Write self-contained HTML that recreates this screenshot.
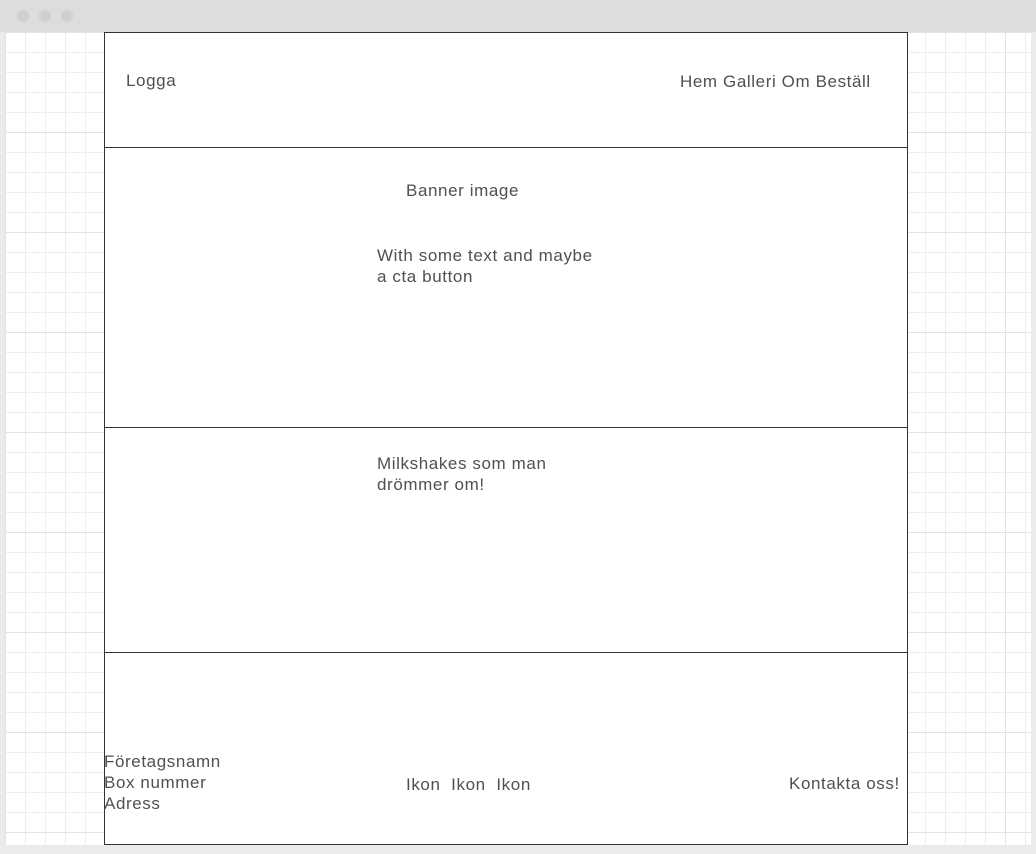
<!DOCTYPE html><html><head><style>
body{margin:0;width:1036px;height:854px;background:#ebebeb;position:relative;overflow:hidden;font-family:"Liberation Sans",sans-serif;color:#505050;font-size:17px}
.top{position:absolute;left:0;top:0;width:1036px;height:32px;background:#dddddd}
.dot{position:absolute;top:10px;width:12px;height:12px;border-radius:50%;background:#cfcfcf}
.grid{position:absolute;left:5px;top:32px;width:1026px;height:813px;background-color:#fff;
background-image:linear-gradient(#e2e2e2 1px,transparent 1px),linear-gradient(90deg,#e2e2e2 1px,transparent 1px),linear-gradient(#eeeeee 1px,transparent 1px),linear-gradient(90deg,#eeeeee 1px,transparent 1px);
background-size:100px 100px,100px 100px,20px 20px,20px 20px;background-position:0 0,0 0,0 0,0 0}
.box{position:absolute;left:104px;width:802px;border:1px solid #333;background:#fff}
.t{position:absolute;line-height:21px;white-space:nowrap;letter-spacing:0.6px}
</style></head><body>
<div class="top"><div class="dot" style="left:17px"></div><div class="dot" style="left:39px"></div><div class="dot" style="left:61px"></div></div>
<div class="grid"></div>
<div class="box" style="top:32px;height:114px"></div>
<div class="box" style="top:147px;height:279px"></div>
<div class="box" style="top:427px;height:224px"></div>
<div class="box" style="top:652px;height:191px"></div>
<div class="t" style="left:126px;top:70px">Logga</div>
<div class="t" style="left:680px;top:71px">Hem Galleri Om Beställ</div>
<div class="t" style="left:406px;top:180px">Banner image</div>
<div class="t" style="left:377px;top:245px">With some text and maybe<br>a cta button</div>
<div class="t" style="left:377px;top:453px">Milkshakes som man<br>drömmer om!</div>
<div class="t" style="left:104px;top:751px">Företagsnamn<br>Box nummer<br>Adress</div>
<div class="t" style="left:406px;top:774px">Ikon&nbsp; Ikon&nbsp; Ikon</div>
<div class="t" style="left:789px;top:773px">Kontakta oss!</div>
</body></html>
